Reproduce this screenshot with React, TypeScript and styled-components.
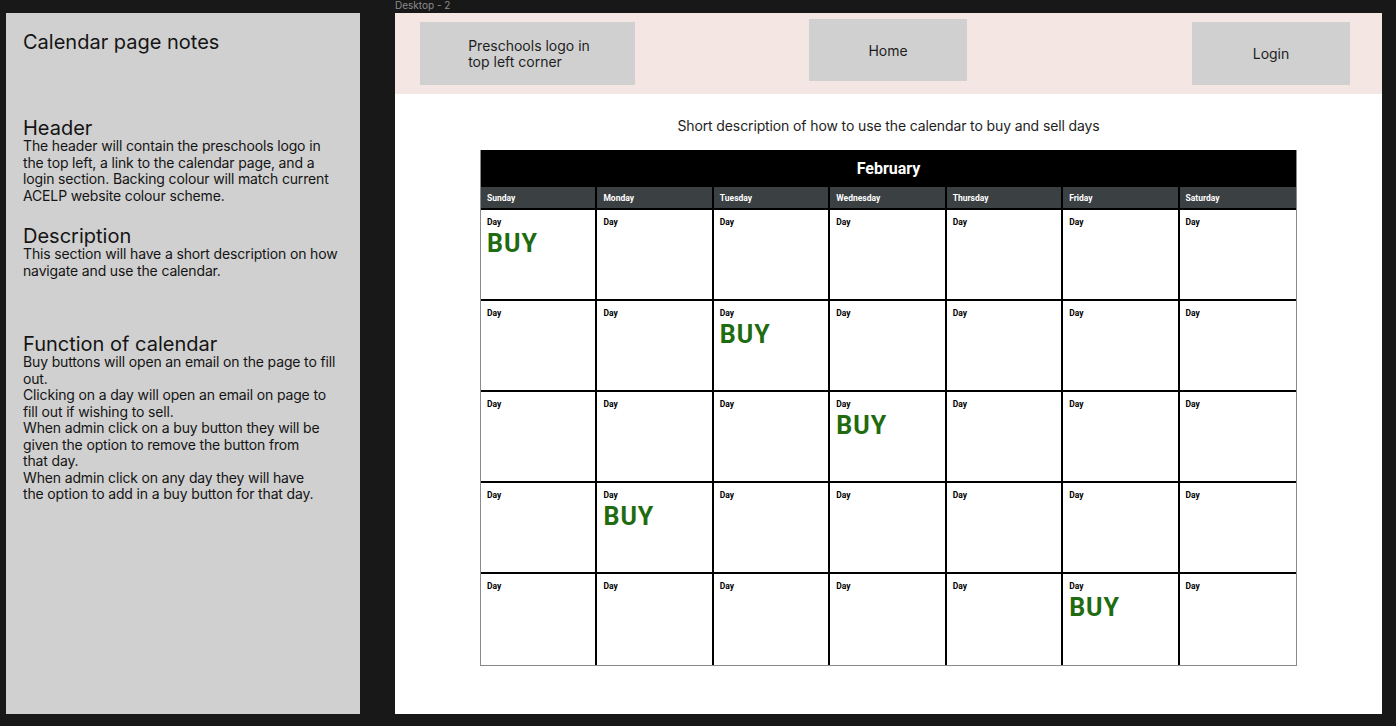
import React from "react";
import styled, { createGlobalStyle } from "styled-components";

const GlobalStyle = createGlobalStyle`
  html, body {
    margin: 0;
    padding: 0;
    background: #181818;
  }
  body {
    font-family: Inter, "Liberation Sans", sans-serif;
  }
`;

const days = ["Sunday", "Monday", "Tuesday", "Wednesday", "Thursday", "Friday", "Saturday"];

// [row, col] of the cells that hold a BUY button
const buyCells = ["0-0", "1-2", "2-3", "3-1", "4-5"];

export default function App() {
    return (
        <Page>
            <GlobalStyle />
            <Notes>
                <NoteTitle>Calendar page notes</NoteTitle>
                <Section gap={64}>
                    <SectionTitle>Header</SectionTitle>
                    <SectionText>
                        The header will contain the preschools logo in<br />
                        the top left, a link to the calendar page, and a<br />
                        login section. Backing colour will match current<br />
                        ACELP website colour scheme.
                    </SectionText>
                </Section>
                <Section gap={22}>
                    <SectionTitle>Description</SectionTitle>
                    <SectionText>
                        This section will have a short description on how<br />
                        navigate and use the calendar.
                    </SectionText>
                </Section>
                <Section gap={55}>
                    <SectionTitle>Function of calendar</SectionTitle>
                    <SectionText>
                        Buy buttons will open an email on the page to fill<br />
                        out.<br />
                        Clicking on a day will open an email on page to<br />
                        fill out if wishing to sell.<br />
                        When admin click on a buy button they will be<br />
                        given the option to remove the button from<br />
                        that day.<br />
                        When admin click on any day they will have<br />
                        the option to add in a buy button for that day.
                    </SectionText>
                </Section>
            </Notes>
            <FrameColumn>
                <FrameLabel>Desktop - 2</FrameLabel>
                <Frame>
                    <Header>
                        <HeaderBox width={215} top={9} height={63}>
                            <LogoText>
                                Preschools logo in<br />
                                top left corner
                            </LogoText>
                        </HeaderBox>
                        <HeaderBox width={158} top={6} height={62}>Home</HeaderBox>
                        <HeaderBox width={158} top={9} height={63} end>Login</HeaderBox>
                    </Header>
                    <Intro>Short description of how to use the calendar to buy and sell days</Intro>
                    <Calendar>
                        <MonthBar>February</MonthBar>
                        <WeekRow>
                            {days.map((d, i) => (
                                <WeekCell key={d} last={i === 6}>{d}</WeekCell>
                            ))}
                        </WeekRow>
                        <DayGrid>
                            {Array.from({ length: 35 }).map((_, n) => {
                                const row = Math.floor(n / 7);
                                const col = n % 7;
                                return (
                                    <DayCell key={n} lastCol={col === 6} lastRow={row === 4}>
                                        <DayLabel>Day</DayLabel>
                                        {buyCells.includes(`${row}-${col}`) && <Buy>BUY</Buy>}
                                    </DayCell>
                                );
                            })}
                        </DayGrid>
                    </Calendar>
                </Frame>
            </FrameColumn>
        </Page>
    );
}

const Page = styled.div`
    display: flex;
    align-items: flex-start;
    gap: 35px;
    padding-left: 6px;
    height: 726px;
    overflow: hidden;
`;

const Notes = styled.div`
    margin-top: 13px;
    width: 354px;
    height: 701px;
    box-sizing: border-box;
    background: #d0d0d0;
    padding: 17px 0 0 17px;
    color: #141414;
`;

const NoteTitle = styled.div`
    font-size: 20px;
    line-height: 24px;
`;

const Section: any = styled.div`
    margin-top: ${(p: any) => p.gap}px;
`;

const SectionTitle = styled.div`
    font-size: 20px;
    line-height: 20px;
`;

const SectionText = styled.div`
    font-size: 14px;
    line-height: 16.5px;
    letter-spacing: -0.15px;
    white-space: nowrap;
`;

const FrameColumn = styled.div`
    display: flex;
    flex-direction: column;
`;

const FrameLabel = styled.div`
    height: 13px;
    font-size: 10px;
    line-height: 11px;
    color: #8c8c8c;
`;

const Frame = styled.div`
    width: 987px;
    height: 701px;
    background: #ffffff;
    display: flex;
    flex-direction: column;
`;

const Header = styled.div`
    height: 81px;
    background: #f4e6e3;
    display: grid;
    grid-template-columns: 389px 158px 1fr;
    align-items: start;
    padding: 0 32px 0 25px;
`;

const HeaderBox: any = styled.div`
    width: ${(p: any) => p.width}px;
    height: ${(p: any) => p.height}px;
    margin-top: ${(p: any) => p.top}px;
    justify-self: ${(p: any) => (p.end ? "end" : "start")};
    background: #d0d0d0;
    display: flex;
    align-items: center;
    justify-content: center;
    font-size: 14px;
    color: #1e1e1e;
`;

const LogoText = styled.div`
    text-align: left;
    line-height: 16px;
    padding-left: 3px;
`;

const Intro = styled.div`
    margin-top: 23px;
    text-align: center;
    font-size: 14px;
    line-height: 17px;
    letter-spacing: -0.12px;
    color: #1e1e1e;
`;

const Calendar = styled.div`
    margin: 16px auto 0;
    width: 815px;
    border: 1px solid #8a8a8a;
    border-top: none;
    font-family: Roboto, "Liberation Sans", sans-serif;
`;

const MonthBar = styled.div`
    height: 37px;
    background: #000;
    color: #fff;
    font-size: 16px;
    font-weight: 700;
    display: flex;
    align-items: center;
    justify-content: center;
`;

const WeekRow = styled.div`
    display: grid;
    grid-template-columns: repeat(7, 1fr);
    height: 23px;
    background: #3b4043;
    border-bottom: 2px solid #000;
    box-sizing: border-box;
`;

const WeekCell: any = styled.div`
    display: flex;
    align-items: center;
    padding: 1px 0 0 6px;
    color: #fff;
    font-size: 8.5px;
    font-weight: 700;
    border-right: ${(p: any) => (p.last ? "none" : "2px solid #000")};
`;

const DayGrid = styled.div`
    display: grid;
    grid-template-columns: repeat(7, 1fr);
    grid-auto-rows: 91px;
`;

const DayCell: any = styled.div`
    box-sizing: border-box;
    padding: 7px 0 0 6px;
    border-right: ${(p: any) => (p.lastCol ? "none" : "2px solid #000")};
    border-bottom: ${(p: any) => (p.lastRow ? "none" : "2px solid #000")};
    display: flex;
    flex-direction: column;
`;

const DayLabel = styled.div`
    font-size: 8.5px;
    font-weight: 700;
    line-height: 10px;
    color: #000;
`;

const Buy = styled.div`
    margin-top: 3px;
    font-size: 25px;
    font-weight: 700;
    line-height: 28px;
    letter-spacing: 1px;
    color: #1f6b10;
`;
